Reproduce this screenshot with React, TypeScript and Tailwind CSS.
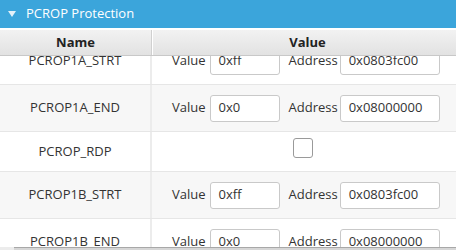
type Row =
  | { name: string; kind: 'range'; value: string; address: string }
  | { name: string; kind: 'check' };

const rows: Row[] = [
  { name: 'PCROP1A_STRT', kind: 'range', value: '0xff', address: '0x0803fc00' },
  { name: 'PCROP1A_END', kind: 'range', value: '0x0', address: '0x08000000' },
  { name: 'PCROP_RDP', kind: 'check' },
  { name: 'PCROP1B_STRT', kind: 'range', value: '0xff', address: '0x0803fc00' },
  { name: 'PCROP1B_END', kind: 'range', value: '0x0', address: '0x08000000' },
];

function Field({ value, width }: { value: string; width: string }) {
  return (
    <div
      className={`${width} h-[27px] flex items-center pl-[8px] bg-white border border-[#c9c9c9] rounded-[3px] text-[13px] text-[#333]`}
    >
      {value}
    </div>
  );
}

function TableRow({ row, index }: { row: Row; index: number }) {
  const bg = index % 2 === 1 ? 'bg-[#f7f7f7]' : 'bg-white';
  return (
    <div className={`flex border-b border-[#e6e6e6] ${bg}`}>
      <div className="w-[152px] shrink-0 flex items-center justify-center border-r-2 border-[#ececec] text-[13px] text-[#333]">
        {row.name}
      </div>
      {row.kind === 'range' ? (
        <div className="flex-1 h-[46px] flex items-center pl-[20px]">
          <span className="text-[13px] text-[#333] mr-[4px]">Value</span>
          <Field value={row.value} width="w-[70px]" />
          <span className="text-[13px] text-[#333] ml-[9px] mr-[2px]">Address</span>
          <Field value={row.address} width="w-[100px]" />
        </div>
      ) : (
        <div className="flex-1 h-[39px] flex items-start pt-[6px] pl-[141px]">
          <div className="w-[20px] h-[20px] rounded-[3px] border border-[#9a9a9a] bg-white" />
        </div>
      )}
    </div>
  );
}

export default function App() {
  return (
    <div
      className="w-[456px] h-[250px] overflow-hidden bg-white flex flex-col"
      style={{ fontFamily: '"Open Sans", "Liberation Sans", sans-serif' }}
    >
      <div className="h-[28px] shrink-0 bg-[#3ba5db] flex items-center text-white text-[13px]">
        <svg width="8" height="6" viewBox="0 0 8 6" className="ml-[8px] mr-[10px]">
          <polygon points="0,0 8,0 4,6" fill="#e3f1f9" />
        </svg>
        PCROP Protection
      </div>
      <div className="h-[2px] shrink-0 bg-white" />
      <div className="w-[462px] flex-1 flex flex-col min-h-0">
        <div className="h-[26px] shrink-0 flex bg-gradient-to-b from-[#f2f2f2] to-[#e2e2e2] border-b border-[#c8c8c8] text-[13px] font-bold text-[#222]">
          <div className="w-[152px] shrink-0 flex items-center justify-center border-r border-[#d0d0d0]">
            Name
          </div>
          <div className="flex-1 flex items-center justify-center border-l border-white">Value</div>
        </div>
        <div className="flex-1 min-h-0 overflow-hidden">
          <div className="-mt-[18px]">
            {rows.map((row, i) => (
              <TableRow key={row.name} row={row} index={i} />
            ))}
          </div>
        </div>
      </div>
      <div className="h-[3px] shrink-0 flex">
        <div className="w-[14px] bg-[#ececec]" />
        <div className="flex-1 bg-[#d6d6d6] border-t border-[#a8a8a8]" />
      </div>
    </div>
  );
}
